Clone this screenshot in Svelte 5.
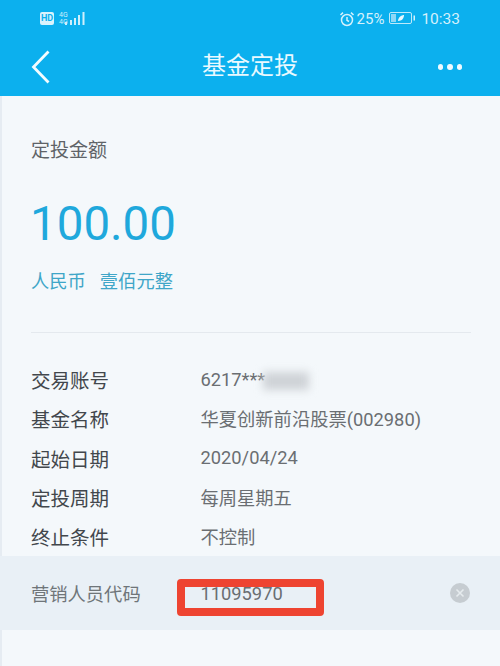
<script>
  const rows = [
    ['交易账号', '6217***'],
    ['基金名称', '华夏创新前沿股票(002980)'],
    ['起始日期', '2020/04/24'],
    ['定投周期', '每周星期五'],
    ['终止条件', '不控制']
  ];
</script>

<div class="page">
  <header>
    <div class="status">
      <div class="status-left">
        <span class="hd">HD</span>
        <span class="net"><i>4G</i><i>4G</i></span>
        <svg class="signal" width="24" height="15" viewBox="0 0 24 15" fill="#cfeffc">
          <rect x="1" y="11" width="2" height="3"/><rect x="6" y="9" width="2" height="5"/><rect x="10" y="7" width="2" height="7"/><rect x="14" y="4" width="2" height="10"/><rect x="18.500" y="1" width="2" height="13"/>
        </svg>
      </div>
      <div class="status-right">
        <svg width="16" height="16" viewBox="0 0 16 16" fill="none" stroke="#d5f1fc" stroke-width="1.500">
          <circle cx="8" cy="9" r="5.500"/><path d="M8 6v3.300l2 1.200M1.500 4 4 1.600M14.500 4 12 1.600"/>
        </svg>
        <span class="pct">25%</span>
        <svg class="batt" width="27" height="13" viewBox="0 0 27 13">
          <rect x="0.500" y="0.500" width="22" height="11" rx="1.500" fill="none" stroke="#bfe9fa"/>
          <rect x="2" y="2" width="5" height="8" fill="#8fd8f6"/>
          <path d="M9 9c0-4 4-6 6-6 0 3-2 6-6 6z" fill="#e8f9ff"/>
          <rect x="24.500" y="3.500" width="1.500" height="5" fill="#d5f1fc"/>
        </svg>
        <span class="time">10:33</span>
      </div>
    </div>
    <div class="nav">
      <svg class="back" width="20" height="34" viewBox="0 0 20 34" fill="none" stroke="#f4fcff" stroke-width="2.800">
        <path d="M17.500 1.500 2.500 17l15 15.500"/>
      </svg>
      <h1>基金定投</h1>
      <div class="dots"><span></span><span></span><span></span></div>
    </div>
  </header>

  <main>
    <section class="amount">
      <div class="caption">定投金额</div>
      <div class="big">100.00</div>
      <div class="words"><span>人民币</span><span>壹佰元整</span></div>
    </section>

    <section class="list">
      {#each rows as [label, value], i}
        <div class="row">
          <span class="label">{label}</span>
          <span class="value">{value}{#if i === 0}<span class="smudge"></span>{/if}</span>
        </div>
      {/each}
    </section>

    <section class="code">
      <span class="code-label">营销人员代码</span>
      <span class="code-value">11095970<span class="mark"></span></span>
      <span class="clear">
        <svg width="20" height="20" viewBox="0 0 20 20">
          <circle cx="10" cy="10" r="10" fill="#c6ccd1"/>
          <path d="M6.500 6.500l7 7M13.500 6.500l-7 7" stroke="#e6ebee" stroke-width="1.600"/>
        </svg>
      </span>
    </section>
  </main>
</div>

<style>
  :global(body) {
    margin: 0;
    background: #f4f8fb;
  }
  .page {
    width: 500px;
    height: 666px;
    overflow: hidden;
    display: flex;
    flex-direction: column;
    font-family: "Roboto", "Noto Sans CJK SC", sans-serif;
    background: #f4f8fb;
  }
  header {
    height: 96px;
    flex: none;
    background: #0cb0ee;
    color: #fff;
    box-sizing: border-box;
  }
  .status {
    height: 37px;
    display: flex;
    justify-content: space-between;
    align-items: center;
    padding: 0 40px 0 40px;
  }
  .status-left, .status-right {
    display: flex;
    align-items: center;
  }
  .hd {
    width: 14px;
    height: 13px;
    background: #d9f3fd;
    color: #0cb0ee;
    font-size: 9px;
    font-weight: 700;
    line-height: 13px;
    text-align: center;
    border-radius: 2px;
  }
  .net {
    display: flex;
    flex-direction: column;
    margin-left: 5px;
  }
  .net i {
    font-style: normal;
    font-size: 7px;
    line-height: 7px;
    color: #cfeffc;
  }
  .signal {
    margin-left: -4px;
  }
  .status-right {
    color: #d5f1fc;
    font-size: 15px;
  }
  .pct {
    margin-left: 2px;
  }
  .batt {
    margin-left: 5px;
  }
  .time {
    margin-left: 5px;
    font-size: 15.500px;
  }
  .nav {
    height: 59px;
    display: flex;
    align-items: center;
    justify-content: space-between;
    padding: 0 38px 0 31px;
    position: relative;
  }
  h1 {
    position: absolute;
    left: 0;
    right: 0;
    top: 0;
    margin: 0;
    text-align: center;
    font-size: 24px;
    font-weight: 400;
    line-height: 59px;
    color: #e9f9ff;
    pointer-events: none;
  }
  .dots {
    display: flex;
    gap: 4px;
    margin-top: 1px;
  }
  .dots span {
    width: 5.500px;
    height: 6px;
    border-radius: 50%;
    background: #eefaff;
  }
  main {
    flex: 1;
    border-left: 2px solid #e6ecf2;
    display: flex;
    flex-direction: column;
  }
  .amount {
    margin: 0 29px 0 29px;
    padding-top: 42px;
    height: 237px;
    flex: none;
    box-sizing: border-box;
    border-bottom: 1px solid #e4e9ee;
  }
  .caption {
    font-size: 19px;
    line-height: 26px;
    color: #5f6367;
  }
  .big {
    margin-top: 30px;
    margin-left: -1px;
    font-size: 47.500px;
    line-height: 60px;
    color: #1fa8dc;
  }
  .words {
    margin-top: 15px;
    display: flex;
    gap: 14px;
    font-size: 18.300px;
    line-height: 26px;
    color: #3fa6c8;
  }
  .list {
    margin-top: 27px;
    padding-left: 29px;
    display: flex;
    flex-direction: column;
    height: 196px;
    flex: none;
  }
  .row {
    height: 39.300px;
    flex: none;
    display: flex;
    align-items: center;
  }
  .label {
    width: 169.500px;
    flex: none;
    font-size: 19.500px;
    color: #42474c;
  }
  .value {
    position: relative;
    font-size: 18.300px;
    color: #6a6e72;
    margin-top: -1px;
  }
  .smudge {
    position: absolute;
    left: 62px;
    top: 3px;
    width: 46px;
    height: 18px;
    background: #cfd3d7;
    filter: blur(4px);
  }
  .code {
    height: 74px;
    flex: none;
    margin-left: -2px;
    padding: 0 30px 0 31px;
    background: #e9f0f6;
    display: flex;
    align-items: center;
  }
  .code-label {
    width: 169.500px;
    flex: none;
    font-size: 18.300px;
    color: #6f7579;
  }
  .code-value {
    position: relative;
    font-size: 18.300px;
    color: #6a6e72;
  }
  .mark {
    position: absolute;
    left: -24px;
    top: -4px;
    width: 131px;
    height: 21px;
    border: 8px solid #ee4431;
    border-radius: 4px;
    box-sizing: content-box;
  }
  .clear {
    margin-left: auto;
    display: flex;
  }
</style>
